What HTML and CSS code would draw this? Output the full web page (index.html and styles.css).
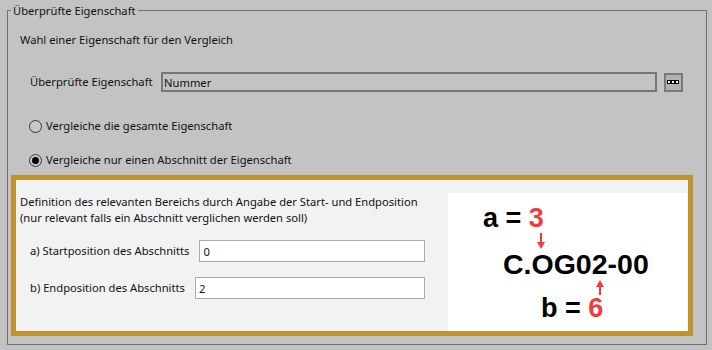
FILE: index.html
```html
<!DOCTYPE html>
<html lang="de">
<head>
    <meta charset="UTF-8">
    <title>Überprüfte Eigenschaft</title>
    <link rel="stylesheet" href="styles.css">
</head>
<body>
    <fieldset class="group">
        <legend>Überprüfte Eigenschaft</legend>

        <p class="intro">Wahl einer Eigenschaft für den Vergleich</p>

        <div class="prop-row">
            <label for="prop">Überprüfte Eigenschaft</label>
            <input id="prop" class="prop-input" type="text" value="Nummer" readonly>
            <button class="dots-btn" title="Auswählen">
                <svg width="13" height="5" viewBox="0 0 13 5">
                    <rect x="0.5" y="0.5" width="3" height="3" fill="#fff" stroke="#000"/>
                    <rect x="4.5" y="0.5" width="3" height="3" fill="#fff" stroke="#000"/>
                    <rect x="8.5" y="0.5" width="3" height="3" fill="#fff" stroke="#000"/>
                </svg>
            </button>
        </div>

        <!-- Auswahl: ganze Eigenschaft oder nur Abschnitt -->
        <label class="radio first"><span class="radio-mark"></span>Vergleiche die gesamte Eigenschaft</label>
        <label class="radio second"><span class="radio-mark checked"></span>Vergleiche nur einen Abschnitt der Eigenschaft</label>

        <div class="range-box">
            <div class="range-form">
                <p class="range-info">Definition des relevanten Bereichs durch Angabe der Start- und Endposition<br>(nur relevant falls ein Abschnitt verglichen werden soll)</p>
                <div class="pos-row">
                    <label for="startPos">a) Startposition des Abschnitts</label>
                    <input id="startPos" type="text" value="0">
                </div>
                <div class="pos-row">
                    <label for="endPos">b) Endposition des Abschnitts</label>
                    <input id="endPos" type="text" value="2">
                </div>
            </div>

            <div class="example">
                <svg width="239" height="138" viewBox="0 0 239 138">
                    <text x="35" y="34" class="ex-small">a = <tspan class="red">3</tspan></text>
                    <line x1="93" y1="40" x2="93" y2="51" stroke="#f23c3c" stroke-width="2"/>
                    <polygon points="89,49 97,49 93,56" fill="#f23c3c"/>
                    <text x="55" y="81" class="ex-big">C.OG02-00</text>
                    <line x1="152" y1="92" x2="152" y2="102" stroke="#f23c3c" stroke-width="2"/>
                    <polygon points="148,94 156,94 152,87" fill="#f23c3c"/>
                    <text x="93" y="124" class="ex-small">b = <tspan class="red">6</tspan></text>
                </svg>
            </div>
        </div>
    </fieldset>
</body>
</html>
```

FILE: styles.css
```css
body {
    margin: 0;
    padding-top: 2px;
    background-color: #c3c3c3;
    font-family: 'Noto Sans', sans-serif;
    font-size: 11.2px;
    line-height: 16px;
    color: #111;
}

.group {
    margin: 0 5px 0 7px;
    padding: 0 13px 8px 3px;
    border: 1px solid #707070;
}

.group legend {
    padding: 0 2px;
    line-height: 17px;
}

.intro {
    margin: 13px 0 0 9px;
}

.prop-row {
    display: flex;
    align-items: center;
    margin: 24px 10px 0 19px;
}

.prop-row label {
    width: 131px;
    flex-shrink: 0;
    white-space: nowrap;
}

.prop-input {
    flex: 1;
    min-width: 0;
    height: 20px;
    box-sizing: border-box;
    padding: 0 1px;
    border: 2px solid #777;
    background-color: #c3c3c3;
    font: inherit;
    color: #111;
    outline: none;
}

.dots-btn {
    width: 19px;
    height: 19px;
    margin-left: 7px;
    padding: 0;
    border: 2px solid #7a7a7a;
    background-color: #b1b1b1;
    display: flex;
    align-items: center;
    justify-content: center;
}

.radio {
    display: flex;
    align-items: center;
    margin-left: 18px;
    white-space: nowrap;
}

.radio.first {
    margin-top: 26px;
}

.radio.second {
    margin-top: 18px;
}

.radio-mark {
    width: 11px;
    height: 11px;
    margin-right: 4px;
    border: 1px solid #333;
    border-radius: 50%;
    background-color: #c9c9c9;
    display: flex;
    align-items: center;
    justify-content: center;
}

.radio-mark.checked::after {
    content: '';
    width: 7px;
    height: 7px;
    border-radius: 50%;
    background-color: #000;
}

.range-box {
    display: flex;
    margin-top: 7px;
    border: 5px solid #bf9430;
    background-color: #f2f2f2;
    height: 151px;
}

.range-form {
    width: 428px;
    padding: 14px 0 0 4px;
}

.range-info {
    margin: 0;
    white-space: nowrap;
}

.pos-row {
    display: flex;
    align-items: center;
    margin: 14px 23px 0 10px;
}

.pos-row + .pos-row {
    margin-top: 15px;
}

.pos-row label {
    white-space: nowrap;
}

.pos-row input {
    flex: 1;
    min-width: 0;
    height: 22px;
    box-sizing: border-box;
    margin-left: 10px;
    padding: 0 3px;
    border: 1px solid #ababab;
    background-color: #fff;
    font: inherit;
    color: #111;
    outline: none;
}

.example {
    margin-top: 13px;
    width: 239px;
    height: 138px;
    background-color: #fff;
}

.example svg {
    display: block;
}

.ex-small {
    font-family: 'Liberation Sans', Arial, sans-serif;
    font-weight: bold;
    font-size: 27px;
}

.ex-big {
    font-family: 'Liberation Sans', Arial, sans-serif;
    font-weight: bold;
    font-size: 28.5px;
}

.red {
    fill: #f23c3c;
}
```
